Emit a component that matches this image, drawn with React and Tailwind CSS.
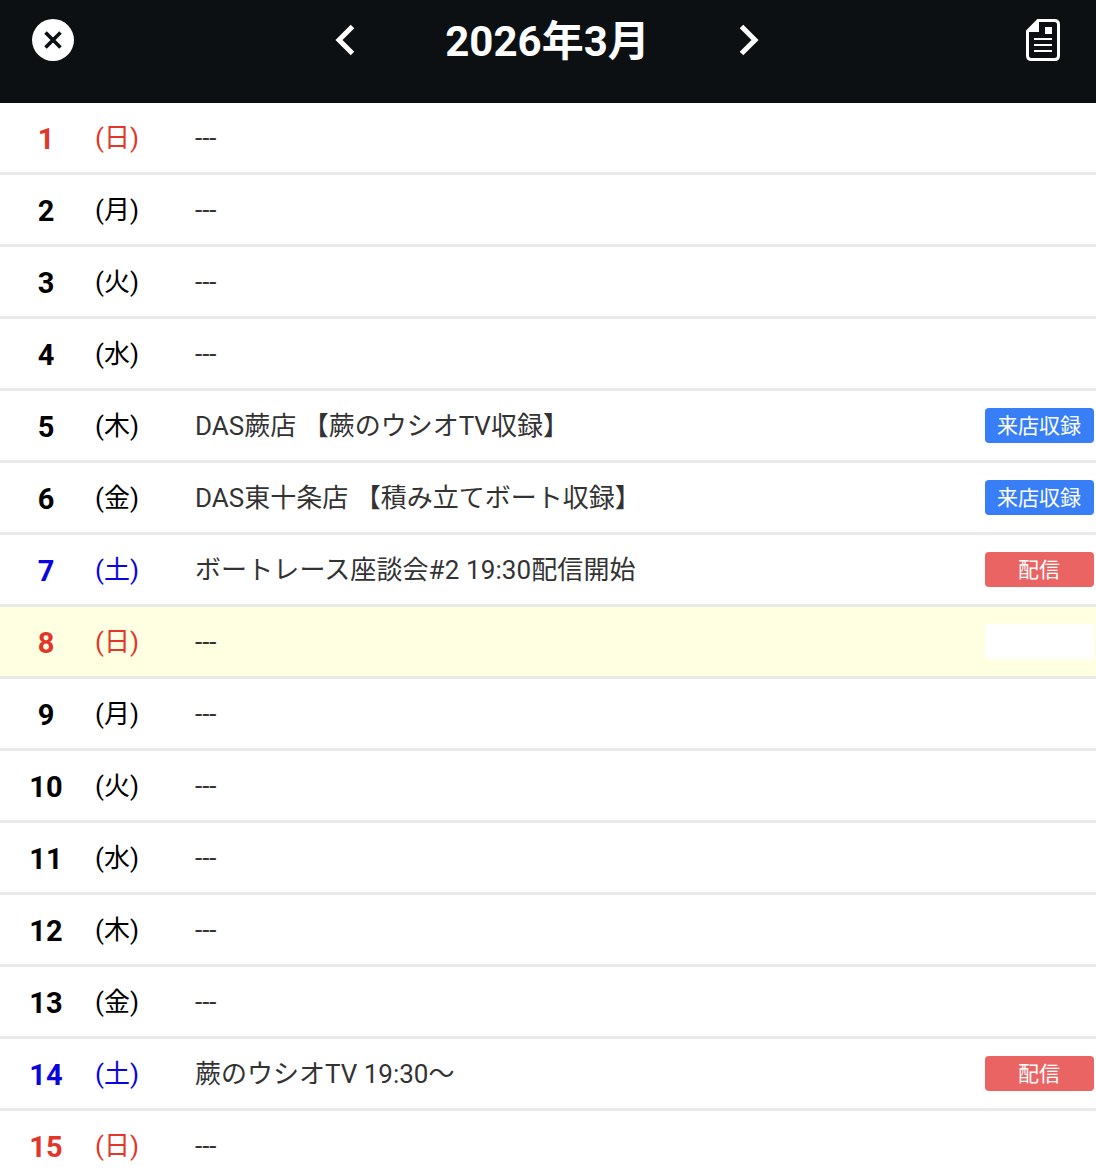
const rows = [
  [1, '日', '---'], [2, '月', '---'], [3, '火', '---'], [4, '水', '---'],
  [5, '木', 'DAS蕨店 【蕨のウシオTV収録】', '来店収録'],
  [6, '金', 'DAS東十条店 【積み立てボート収録】', '来店収録'],
  [7, '土', 'ボートレース座談会#2 19:30配信開始', '配信'],
  [8, '日', '---', ' '], [9, '月', '---'], [10, '火', '---'], [11, '水', '---'],
  [12, '木', '---'], [13, '金', '---'], [14, '土', '蕨のウシオTV 19:30〜', '配信'], [15, '日', '---'],
];
const dayColor = { 日: 'text-[#e1372b]', 土: 'text-[#0a05dc]' };
const tagColor = { 来店収録: 'bg-[#387ef7]', 配信: 'bg-[#ea6464]', ' ': 'bg-white' };

function Row({ row: [date, day, text, tag] }) {
  const color = dayColor[day] || 'text-black';
  return (
    <li className={`flex h-[72px] shrink-0 items-center border-b-[3px] border-[#eaeaea] ${date === 8 ? 'bg-[#ffffe2]' : 'bg-white'}`}>
      <span className={`w-[92px] pt-[3px] text-center text-[29px] leading-[40px] font-bold ${color}`}>{date}</span>
      <span className={`w-[103px] pl-[3px] text-[26px] leading-[40px] ${color}`}>({day})</span>
      <span className={`flex-1 whitespace-nowrap text-[26px] leading-[40px] text-[#333] ${date === 7 ? 'tracking-[0.1px]' : ''}`}>{text}</span>
      {tag && <span className={`mr-[2px] flex h-[35px] w-[109px] items-center justify-center rounded-[4px] pt-[3px] pr-[1px] text-[21px] text-white ${tagColor[tag]}`}>{tag}</span>}
    </li>
  );
}

export default function App() {
  return (
    <div className="flex h-[1176px] w-[1096px] flex-col overflow-hidden bg-white font-[Roboto,'Noto_Sans_CJK_JP',sans-serif]">
      <header className="flex h-[103px] shrink-0 items-start bg-[#0c1013] text-white">
        <button aria-label="閉じる" className="mt-[19px] ml-[32px]">
          <svg width="42" height="42" viewBox="0 0 42 42"><circle cx="21" cy="21" r="21" fill="white" /><path d="M13.5 13.5l15 15M28.5 13.5l-15 15" stroke="#0c1013" strokeWidth="3.6" /></svg>
        </button>
        <div className="ml-[260px] flex h-[80px] items-center">
          <svg width="22" height="32" viewBox="0 0 22 32" fill="none" stroke="white" strokeWidth="5"><path d="M18.5 2.5L5 16l13.5 13.5" /></svg>
          <h1 className="w-[382px] pt-[2px] pl-[1px] text-center text-[42px] font-bold">2026年3月</h1>
          <svg width="22" height="32" viewBox="0 0 22 32" fill="none" stroke="white" strokeWidth="5"><path d="M3.5 2.5L17 16 3.5 29.5" /></svg>
        </div>
        <button aria-label="メモ" className="mt-[19px] mr-[35px] ml-auto">
          <svg width="36" height="42" viewBox="0 0 36 42" fill="none">
            <path d="M13 1.5H29.5Q33.5 1.5 33.5 5.5V36.5Q33.5 40.5 29.5 40.5H6.5Q2.5 40.5 2.5 36.5V12Z" stroke="white" strokeWidth="3" />
            <path d="M14 1V13H2Z" fill="white" />
            <path d="M20 8h7v7h-7z" fill="white" />
            <path d="M9 20h18M9 26h18M9 32h18" stroke="white" strokeWidth="2" />
          </svg>
        </button>
      </header>
      <ul>{rows.map((row) => <Row key={row[0]} row={row} />)}</ul>
    </div>
  );
}
